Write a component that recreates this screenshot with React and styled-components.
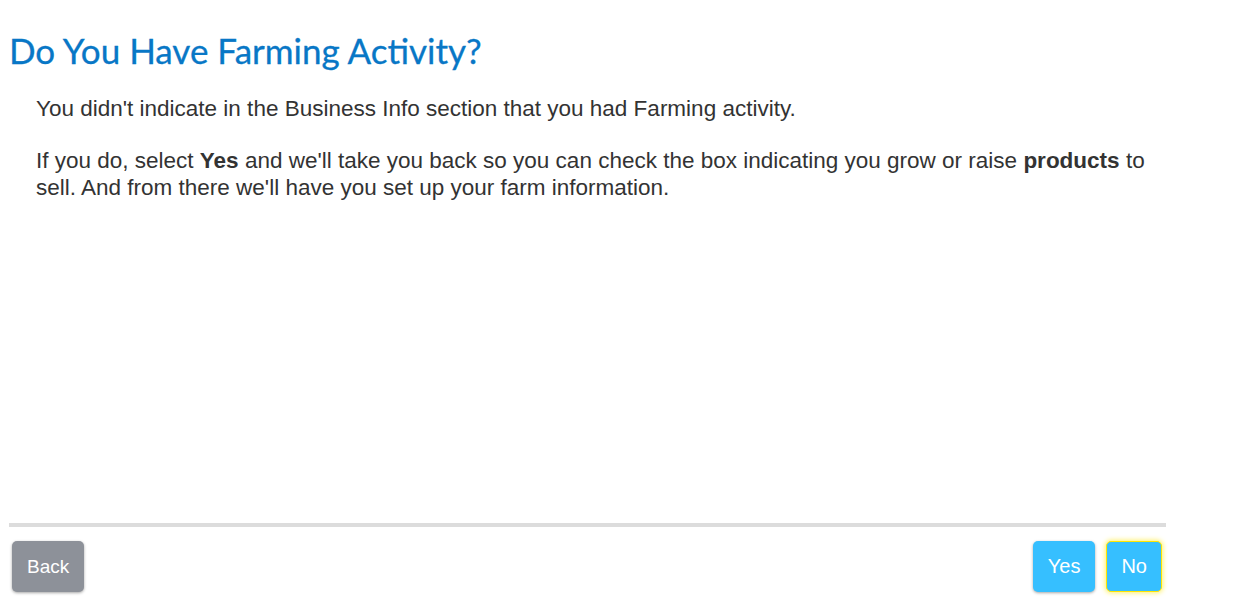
import React from "react";
import styled, { createGlobalStyle } from "styled-components";

const GlobalStyle = createGlobalStyle`
    html, body {
        margin: 0;
        padding: 0;
        background: #fff;
    }
    body {
        font-family: "Liberation Sans", Arial, sans-serif;
    }
`;

function App() {
    return (
        <>
            <GlobalStyle />
            <Page>
                <Heading>Do You Have Farming Activity?</Heading>
                <Body>
                    <Paragraph>
                        You didn't indicate in the Business Info section that
                        you had Farming activity.
                    </Paragraph>
                    <Paragraph>
                        If you do, select <strong>Yes</strong> and we'll take
                        you back so you can check the box indicating you grow
                        or raise <strong>products</strong> to sell. And from
                        there we'll have you set up your farm information.
                    </Paragraph>
                </Body>
                <Footer>
                    <Button variant="back">Back</Button>
                    <RightButtons>
                        <Button>Yes</Button>
                        <Button focused>No</Button>
                    </RightButtons>
                </Footer>
            </Page>
        </>
    );
}

export default App;

const Page = styled.main`
    width: 1157px;
    height: 599px;
    margin-left: 9px;
    display: flex;
    flex-direction: column;
`;
const Heading = styled.h1`
    margin: 27px 0 0 0;
    font-family: Lato, "Open Sans", sans-serif;
    font-weight: 400;
    font-size: 35px;
    line-height: 46px;
    color: #0877c6;
    -webkit-text-stroke: 0.3px #0877c6;
`;
const Body = styled.div`
    flex: 1;
    padding: 0 0 0 27px;
    margin-top: 22px;
`;
const Paragraph = styled.p`
    margin: 0 0 25px;
    font-size: 22.5px;
    line-height: 27px;
    color: #333;
    strong {
        font-weight: 700;
    }
`;
const Footer = styled.footer`
    border-top: 4px solid #dcdcdc;
    padding: 14px 4px 7px 3px;
    display: flex;
    justify-content: space-between;
    align-items: center;
`;
const RightButtons = styled.div`
    display: flex;
    gap: 11px;
`;
const Button = styled.button`
    height: 51px;
    padding: 0 14px;
    border-radius: 5px;
    font-family: "Liberation Sans", Arial, sans-serif;
    font-size: ${(p) => (p.variant === "back" ? "19px" : "20px")};
    color: #fff;
    cursor: pointer;
    background: ${(p) => (p.variant === "back" ? "#8d9199" : "#36bfff")};
    border: 1px solid ${(p) => (p.focused ? "#ffe600" : "transparent")};
    box-shadow: ${(p) =>
        p.focused
            ? "0 0 5px 1px #fff06a"
            : "0 1px 3px rgba(0, 0, 0, 0.35)"};
`;
